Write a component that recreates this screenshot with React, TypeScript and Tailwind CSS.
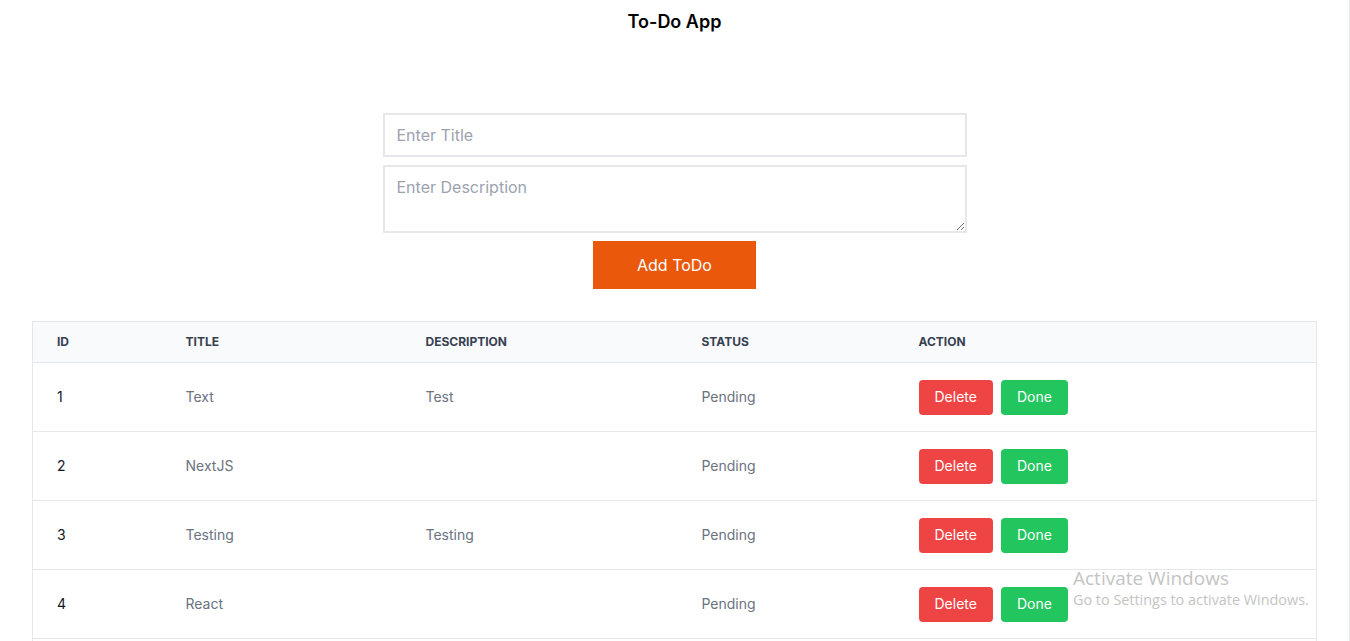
import { useState } from 'react';

type Todo = {
  id: number;
  title: string;
  description: string;
  status: string;
};

const initialTodos: Todo[] = [
  { id: 1, title: 'Text', description: 'Test', status: 'Pending' },
  { id: 2, title: 'NextJS', description: '', status: 'Pending' },
  { id: 3, title: 'Testing', description: 'Testing', status: 'Pending' },
  { id: 4, title: 'React', description: '', status: 'Pending' },
  { id: 5, title: 'Tailwind', description: '', status: 'Pending' },
];

export default function App() {
  const [todos, setTodos] = useState<Todo[]>(initialTodos);
  const [title, setTitle] = useState('');
  const [description, setDescription] = useState('');

  const addTodo = () => {
    if (!title.trim()) return;
    setTodos([
      ...todos,
      { id: todos.length + 1, title, description, status: 'Pending' },
    ]);
    setTitle('');
    setDescription('');
  };

  return (
    <div
      className="relative min-h-screen bg-white border-r border-[#e5e7eb] overflow-hidden"
      style={{ fontFamily: 'Inter, "Liberation Sans", sans-serif' }}
    >
      <h1 className="pt-2 text-center text-lg leading-7 font-semibold text-black">To-Do App</h1>

      <div className="mt-[77px] flex flex-col items-center gap-2">
        <input
          value={title}
          onChange={(e) => setTitle(e.target.value)}
          placeholder="Enter Title"
          className="w-[584px] border-2 border-[#e5e7eb] px-3 py-2 text-base text-gray-700 placeholder:text-[#9ca3af] outline-none"
        />
        <textarea
          value={description}
          onChange={(e) => setDescription(e.target.value)}
          placeholder="Enter Description"
          rows={2}
          className="w-[584px] border-2 border-[#e5e7eb] px-3 py-2 text-base text-gray-700 placeholder:text-[#9ca3af] outline-none"
        />
        <button
          onClick={addTodo}
          className="bg-[#ea580c] px-11 py-3 text-base text-white"
        >
          Add ToDo
        </button>
      </div>

      <div className="mt-8 px-8">
        <table className="w-full table-fixed border border-[#e5e7eb] border-collapse text-left">
          <thead className="bg-[#f9fafb]">
            <tr className="border-b border-[#e5e7eb]">
              <th className="w-[129px] px-6 py-3 text-xs font-bold uppercase text-[#374151]">ID</th>
              <th className="w-[240px] px-6 py-3 text-xs font-bold uppercase text-[#374151]">Title</th>
              <th className="w-[276px] px-6 py-3 text-xs font-bold uppercase text-[#374151]">Description</th>
              <th className="w-[217px] px-6 py-3 text-xs font-bold uppercase text-[#374151]">Status</th>
              <th className="px-6 py-3 text-xs font-bold uppercase text-[#374151]">Action</th>
            </tr>
          </thead>
          <tbody>
            {todos.map((todo) => (
              <tr key={todo.id} className="border-b border-[#e5e7eb]">
                <td className="px-6 py-6 text-sm text-[#111827]">{todo.id}</td>
                <td className="px-6 py-6 text-sm text-[#6b7280]">{todo.title}</td>
                <td className="px-6 py-6 text-sm text-[#6b7280]">{todo.description}</td>
                <td className="px-6 py-6 text-sm text-[#6b7280]">{todo.status}</td>
                <td className="px-6 py-4 text-sm align-middle">
                  <div className="flex gap-2">
                    <button
                      onClick={() => setTodos(todos.filter((t) => t.id !== todo.id))}
                      className="h-[35px] rounded bg-[#ef4444] px-4 text-sm text-white"
                    >
                      Delete
                    </button>
                    <button className="h-[35px] rounded bg-[#22c55e] px-4 text-sm text-white">
                      Done
                    </button>
                  </div>
                </td>
              </tr>
            ))}
          </tbody>
        </table>
      </div>

      {/* windows watermark */}
      <div
        className="absolute left-[1073px] top-[566px] text-[#c4c4c4] pointer-events-none"
        style={{ fontFamily: '"Open Sans", "Noto Sans", sans-serif' }}
      >
        <div className="text-[19px] leading-6">Activate Windows</div>
        <div className="text-[14.4px] leading-5">Go to Settings to activate Windows.</div>
      </div>
    </div>
  );
}
